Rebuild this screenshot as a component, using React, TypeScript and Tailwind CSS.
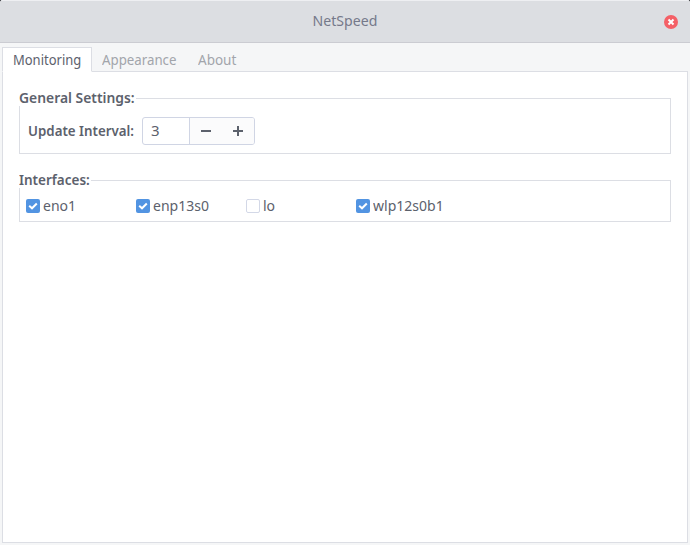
import type { ReactNode } from "react";

function Tab({ label, active, className, textClass }: { label: string; active?: boolean; className: string; textClass: string }) {
  return (
    <button
      role="tab"
      aria-selected={!!active}
      className={`box-border h-[25px] shrink-0 whitespace-nowrap border text-left leading-[23px] ${
        active ? "relative -mb-px border-[#dcdee4] border-b-white bg-white text-[#5c616c]" : "border-transparent text-[#a2a5ab]"
      } ${className}`}
    >
      <span className={`block w-max origin-left ${textClass}`}>{label}</span>
    </button>
  );
}

function Frame({ title, labelClass, textClass, className, children }: { title: string; labelClass: string; textClass: string; className: string; children: ReactNode }) {
  return (
    <section className={`relative box-border border border-[#dcdee4] ${className}`}>
      <h2 className={`absolute -left-px -top-[8px] h-[15px] whitespace-nowrap bg-white font-semibold leading-[13px] ${labelClass}`}>
        <span className={`block w-max origin-left ${textClass}`}>{title}</span>
      </h2>
      {children}
    </section>
  );
}

function CheckItem({ label, checked }: { label: string; checked: boolean }) {
  return (
    <label className="flex w-[110px] items-center gap-[3px]">
      <span
        role="checkbox"
        aria-checked={checked}
        className={`box-border flex size-[14px] shrink-0 items-center justify-center rounded-[2px] ${
          checked ? "bg-[#5294e2]" : "border border-[#d3d8e7] bg-white"
        }`}
      >
        {checked && (
          <svg width="14" height="14" viewBox="0 0 14 14" fill="none" stroke="white" strokeWidth="2">
            <path d="M3.2 6.7 6 9.3 10.8 4.5" />
          </svg>
        )}
      </span>
      <span className="block h-5 w-max origin-left scale-x-[0.935] whitespace-nowrap leading-[18px]">{label}</span>
    </label>
  );
}

export default function App() {
  return (
    <div className="bg-[#16191d]">
      <div className="flex h-[545px] w-[690px] flex-col overflow-hidden rounded-t-[3px] bg-[#f5f6f7] font-['Noto_Sans',sans-serif] text-[15px] text-[#5c616c]">
        <header className="box-border flex h-[43px] shrink-0 items-center border-b border-t border-b-[#cbccd2] border-t-[#eeeff2] bg-[#dcdee2] pr-3">
          <div className="w-[26px]" />
          <h1 className="flex-1 scale-x-[0.94] pb-[3px] text-center leading-5 text-[#75798a]">NetSpeed</h1>
          <button aria-label="Close" className="size-[14px]">
            <svg width="14" height="14" viewBox="0 0 14 14">
              <circle cx="7" cy="7" r="7" fill="#f46067" />
              <path d="m4.5 4.5 5 5m0-5-5 5" stroke="white" strokeWidth="2" />
            </svg>
          </button>
        </header>
        <div role="tablist" className="ml-[2px] mt-1 flex h-6 shrink-0">
          <Tab label="Monitoring" active className="w-[90px] pl-[10px]" textClass="scale-x-[0.865]" />
          <Tab label="Appearance" className="w-[95px] pl-[9px]" textClass="scale-x-[0.885]" />
          <Tab label="About" className="w-[70px] pl-[10px]" textClass="scale-x-[0.9]" />
        </div>
        <main className="mx-[2px] mb-[2px] box-border flex-1 border border-[#dcdee4] bg-white px-4 pt-[26px]">
          <Frame title="General Settings:" labelClass="w-[117px]" textClass="scale-x-[0.925]" className="h-14">
            <div className="flex h-full items-center pb-px pl-2 pt-[10px]">
              <div className="w-[114px] whitespace-nowrap font-semibold">
                <span className="block w-max origin-left scale-x-[0.888]">Update Interval:</span>
              </div>
              <div className="box-border flex h-7 w-[113px] overflow-hidden rounded-[3px] border border-[#d0d5e4]">
                <span className="w-[46px] pl-2 leading-[25px]">3</span>
                <div className="box-border flex flex-1 items-center border-l border-[#d0d5e4] bg-[#fbfbfc]">
                  <button aria-label="Decrease" className="flex w-8 justify-center">
                    <svg width="10" height="10" viewBox="0 0 10 10" fill="#5c616c"><path d="M0 4h10v2H0z" /></svg>
                  </button>
                  <button aria-label="Increase" className="flex w-8 justify-center">
                    <svg width="10" height="10" viewBox="0 0 10 10" fill="#5c616c"><path d="M0 4h4V0h2v4h4v2H6v4H4V6H0z" /></svg>
                  </button>
                </div>
              </div>
            </div>
          </Frame>
          <Frame title="Interfaces:" labelClass="w-[72px]" textClass="scale-x-[0.9]" className="mt-[26px] h-[42px]">
            <div className="flex pl-[6px] pt-[15px]">
              <CheckItem label="eno1" checked />
              <CheckItem label="enp13s0" checked />
              <CheckItem label="lo" checked={false} />
              <CheckItem label="wlp12s0b1" checked />
            </div>
          </Frame>
        </main>
      </div>
    </div>
  );
}
